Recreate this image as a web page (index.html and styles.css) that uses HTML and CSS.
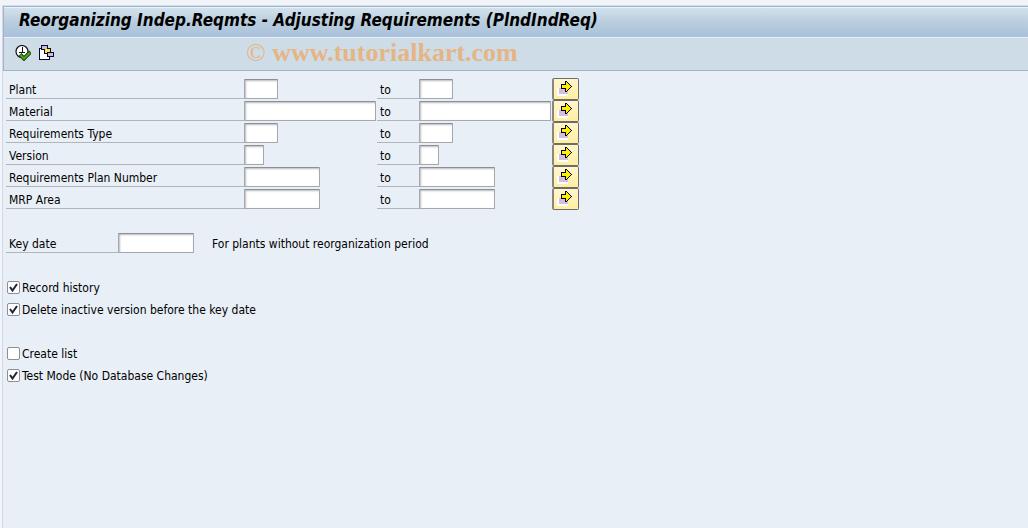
FILE: index.html
```html
<!DOCTYPE html>
<html lang="en">
<head>
<meta charset="utf-8">
<title>Reorganizing Indep.Reqmts</title>
<link rel="stylesheet" href="styles.css">
</head>
<body>
<svg class="defs" aria-hidden="true">
  <symbol id="multi" viewBox="0 0 16 16" shape-rendering="crispEdges">
    <path d="M0 7h11v8H0z" fill="#fff"/>
    <path d="M2 7h9v6H2z" fill="#d3bfdc"/>
    <path d="M8 0h2v1h1v1h1v1h1v1h1v1h1v1h-1v1h-1v1h-1v1h-1v1h-1v1H8V8H4V3h4z" fill="#000"/>
    <path d="M9 1v3H5v3h4v3h1V9h1V8h1V7h1V6h1V5h-1V4h-1V3h-1V2h-1V1z" fill="#ffee00"/>
  </symbol>
</svg>
<main class="window">
  <header>
    <h1 class="title">Reorganizing Indep.Reqmts - Adjusting Requirements (PlndIndReq)</h1>
    <div class="toolbar">
      <button class="tool" type="button" aria-label="Execute">
        <svg width="16" height="16" viewBox="0 0 16 16">
          <circle cx="7" cy="6.500" r="6" fill="#fff" stroke="#111" stroke-width="1.2"/>
          <path d="M7.500 2v5M4 7.500h6" fill="none" stroke="#111"/>
          <path d="M5 9.500l4 4 6.500-6.500" fill="none" stroke="#1d3d10" stroke-width="4"/>
          <path d="M5.500 10l3.500 3.500 6-6" fill="none" stroke="#4fa51c" stroke-width="2"/>
        </svg>
      </button>
      <button class="tool" type="button" aria-label="Get variant">
        <svg width="16" height="16" viewBox="0 0 16 16" shape-rendering="crispEdges">
          <path d="M0 3h11v12H0z" fill="#0a0a28"/>
          <path d="M1 4h9v10H1z" fill="#fff"/>
          <path d="M2 0h7v5H2zM5 3h7v6H5zM8 7h7v5H8z" fill="#0a0a28"/>
          <path d="M3 1h5v3H3zM9 8h5v3H9z" fill="#c4bfe2"/>
          <path d="M6 4h5v3H8v1H6z" fill="#ffe83a"/>
        </svg>
      </button>
      <p class="watermark"><span class="copy">©</span> www.tutorialkart.com</p>
    </div>
  </header>
  <form class="content">
    <div class="ranges">
      <div class="row"><label class="name" for="a1">Plant</label><span class="cell"><input class="field w4" id="a1"></span><label class="to" for="b1">to</label><span class="cell"><input class="field w4" id="b1"></span><button class="more" type="button" aria-label="Multiple selection"><svg width="16" height="16"><use href="#multi"/></svg></button></div>
      <div class="row"><label class="name" for="a2">Material</label><span class="cell"><input class="field w18" id="a2"></span><label class="to" for="b2">to</label><span class="cell"><input class="field w18" id="b2"></span><button class="more" type="button" aria-label="Multiple selection"><svg width="16" height="16"><use href="#multi"/></svg></button></div>
      <div class="row"><label class="name" for="a3">Requirements Type</label><span class="cell"><input class="field w4" id="a3"></span><label class="to" for="b3">to</label><span class="cell"><input class="field w4" id="b3"></span><button class="more" type="button" aria-label="Multiple selection"><svg width="16" height="16"><use href="#multi"/></svg></button></div>
      <div class="row"><label class="name" for="a4">Version</label><span class="cell"><input class="field w2" id="a4"></span><label class="to" for="b4">to</label><span class="cell"><input class="field w2" id="b4"></span><button class="more" type="button" aria-label="Multiple selection"><svg width="16" height="16"><use href="#multi"/></svg></button></div>
      <div class="row"><label class="name" for="a5">Requirements Plan Number</label><span class="cell"><input class="field w10" id="a5"></span><label class="to" for="b5">to</label><span class="cell"><input class="field w10" id="b5"></span><button class="more" type="button" aria-label="Multiple selection"><svg width="16" height="16"><use href="#multi"/></svg></button></div>
      <div class="row"><label class="name" for="a6">MRP Area</label><span class="cell"><input class="field w10" id="a6"></span><label class="to" for="b6">to</label><span class="cell"><input class="field w10" id="b6"></span><button class="more" type="button" aria-label="Multiple selection"><svg width="16" height="16"><use href="#multi"/></svg></button></div>
    </div>
    <div class="keydate"><label class="name" for="kd">Key date</label><input class="field w10" id="kd"><span class="hint">For plants without reorganization period</span></div>
    <div class="checks">
      <label class="check"><input type="checkbox" checked>Record history</label>
      <label class="check"><input type="checkbox" checked>Delete inactive version before the key date</label>
    </div>
    <div class="checks">
      <label class="check"><input type="checkbox">Create list</label>
      <label class="check"><input type="checkbox" checked>Test Mode (No Database Changes)</label>
    </div>
  </form>
</main>
</body>
</html>
```
FILE: styles.css
```css
* { box-sizing: border-box; }
body {
  margin: 0;
  padding: 5px 0 0 2px;
  min-height: 100vh;
  display: flex;
  background: #f1f5fa;
  color: #000;
  font: 12px/24px "DejaVu Sans Condensed", "DejaVu Sans", sans-serif;
}
.defs { display: none; }
.window {
  flex: 1;
  background: #e8eff6;
  border-left: 1px solid #d0d8e8;
  border-top: 1px solid #d5dfe9;
}
header {
  border: 1px solid #a3b4c6;
  border-right: 0;
}
.title {
  margin: 0;
  padding: 0 15px;
  height: 31px;
  border-top: 1px solid #eaf2f8;
  border-bottom: 1px solid #e6eff6;
  background: linear-gradient(#d1e1ee, #b9cddd 50%, #a9c1dc);
  font: italic bold 17px/25px "DejaVu Sans Condensed", "DejaVu Sans", sans-serif;
  white-space: nowrap;
}
.toolbar {
  display: flex;
  align-items: center;
  gap: 8px;
  height: 32px;
  padding: 0 0 2px 11px;
  background: #cedce7;
}
.tool {
  display: flex;
  padding: 0;
  border: 0;
  background: none;
}
.watermark {
  margin: 0 0 0 183px;
  color: #e5b583;
  font: bold 26px/30px "Liberation Serif", serif;
  white-space: nowrap;
}
.copy { font-weight: normal; }
.content { padding: 7px 3px; }
.row {
  display: grid;
  grid-template-columns: 238px 133px 42px 133px 27px;
  height: 22px;
}
.name, .to {
  height: 21px;
  padding-left: 3px;
  border-bottom: 1px solid #b0b5ba;
}
.cell { display: flex; }
.field {
  height: 20px;
  margin: 1px 0 0;
  padding: 0 3px;
  border: 1px solid #a5a9ae;
  border-top-color: #8c9095;
  border-radius: 1px;
  background: #fff;
  box-shadow: inset 1px 1px 2px #b8babe;
  font: inherit;
}
.w2 { width: 20px; }
.w4 { width: 34px; }
.w10 { width: 76px; }
.w18 { width: 132px; }
.more {
  display: flex;
  align-items: flex-start;
  padding: 2px 0 0 3px;
  border: 1px solid #6e6c6a;
  border-left: 2px solid #8a867c;
  border-radius: 2px;
  background: linear-gradient(#fff6d0, #ffeea0);
}
.keydate {
  display: flex;
  height: 22px;
  margin-top: 22px;
}
.keydate .name { width: 112px; }
.hint { margin-left: 18px; }
.checks {
  display: flex;
  flex-direction: column;
  align-items: flex-start;
  margin-top: 22px;
}
.check {
  display: flex;
  height: 22px;
  gap: 2px;
}
.check input {
  appearance: none;
  width: 13px;
  height: 13px;
  margin: 5px 0 0 1px;
  border: 1px solid #8c9095;
  border-radius: 2px;
  background: #fff;
}
.check input:checked {
  background: #fff url("data:image/svg+xml,%3Csvg xmlns='http://www.w3.org/2000/svg' viewBox='0 0 11 11'%3E%3Cpath d='M2 5l2.500 3.500L9 2' fill='none' stroke='%23222238' stroke-width='2'/%3E%3C/svg%3E");
}
```
